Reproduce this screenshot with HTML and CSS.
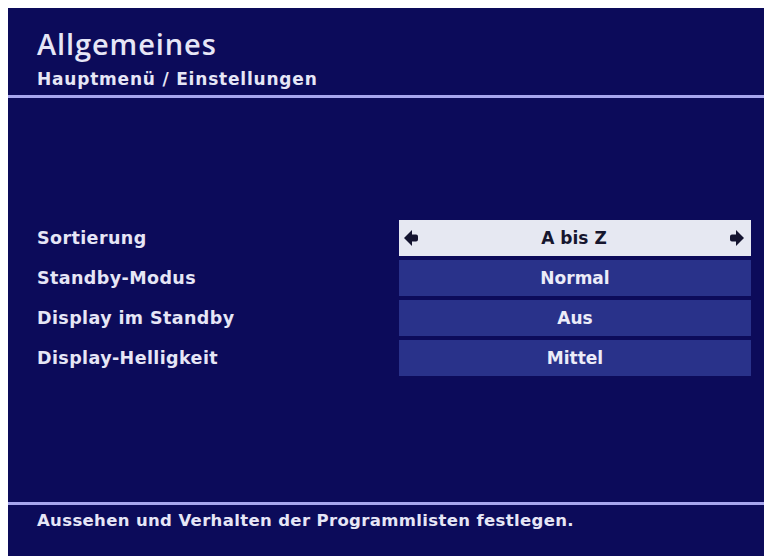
FILE: index.html
```html
<!DOCTYPE html>
<html lang="de">
<head>
<meta charset="utf-8">
<title>Allgemeines</title>
<link rel="stylesheet" href="styles.css">
</head>
<body>
<div class="screen">
  <header class="header">
    <div class="title">Allgemeines</div>
    <div class="subtitle">Hauptmenü / Einstellungen</div>
  </header>
  <div class="rule"></div>
  <main class="main">
    <div class="rows">
      <div class="label">Sortierung</div>
      <div class="value selected">
        <svg class="arrow" viewBox="0 0 14 16" width="14" height="16"><path d="M0 8 L8 0 L8 4.5 L12 4.5 Q14 4.5 14 6.5 L14 9.5 Q14 11.5 12 11.5 L8 11.5 L8 16 Z" fill="#141430"/></svg>
        <span class="vtext">A bis Z</span>
        <svg class="arrow" viewBox="0 0 14 16" width="14" height="16"><path d="M14 8 L6 0 L6 4.5 L2 4.5 Q0 4.5 0 6.5 L0 9.5 Q0 11.5 2 11.5 L6 11.5 L6 16 Z" fill="#141430"/></svg>
      </div>
      <div class="label">Standby-Modus</div>
      <div class="value"><span class="vtext">Normal</span></div>
      <div class="label">Display im Standby</div>
      <div class="value"><span class="vtext">Aus</span></div>
      <div class="label">Display-Helligkeit</div>
      <div class="value"><span class="vtext">Mittel</span></div>
    </div>
  </main>
  <div class="rule"></div>
  <footer class="footer">Aussehen und Verhalten der Programmlisten festlegen.</footer>
</div>
</body>
</html>
```
FILE: styles.css
```css
html, body {
  margin: 0;
  padding: 0;
  background: #ffffff;
}
.screen {
  margin: 8px 9px 0 8px;
  height: 548px;
  background: #0c0b5a;
  display: flex;
  flex-direction: column;
  font-family: "DejaVu Sans", "Open Sans", sans-serif;
  font-weight: 700;
  color: #e6e6f6;
}
.header {
  box-sizing: border-box;
  height: 87px;
  padding: 20px 0 0 29px;
  flex: none;
}
.title {
  font-family: "Open Sans", "DejaVu Sans", sans-serif;
  font-size: 29px;
  line-height: 32px;
  font-weight: 600;
  letter-spacing: 0.9px;
}
.subtitle {
  margin-top: 9px;
  font-size: 17px;
  line-height: 20px;
  letter-spacing: 0.8px;
}
.rule {
  flex: none;
  height: 3px;
  background: #a7a6ee;
}
.main {
  flex: 1;
  padding: 122px 13px 0 29px;
}
.rows {
  display: grid;
  grid-template-columns: 1fr 352px;
  grid-auto-rows: 36px;
  row-gap: 4px;
  align-items: center;
}
.label {
  font-size: 17.5px;
  line-height: 22px;
  letter-spacing: 0.4px;
}
.value {
  height: 36px;
  background: #29328a;
  display: flex;
  align-items: center;
  justify-content: center;
  font-size: 17px;
  color: #ececf8;
}
.value.selected {
  background: #e6e8f2;
  color: #16162e;
  justify-content: space-between;
  padding: 0 7px 0 5px;
  box-sizing: border-box;
}
.vtext {
  line-height: 22px;
}
.footer {
  flex: none;
  box-sizing: border-box;
  height: 51px;
  padding: 6px 0 0 29px;
  font-size: 16.5px;
  line-height: 20px;
  letter-spacing: 0.35px;
}
```
